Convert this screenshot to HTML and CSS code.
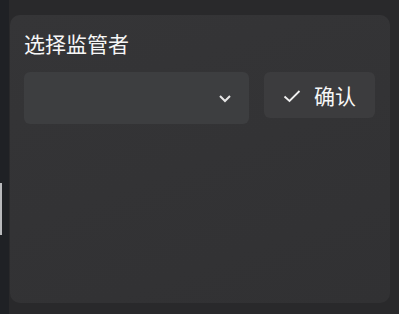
FILE: index.html
```html
<!DOCTYPE html>
<html lang="zh">
<head>
  <meta charset="UTF-8">
  <meta name="viewport" content="width=device-width, initial-scale=1.0">
  <title>选择监管者</title>
  <link rel="stylesheet" href="styles.css">
</head>
<body>

  <div class="side">
    <div class="side-tab"></div>
  </div>

  <div class="main">
    <div class="panel">
      <div class="panel-title">选择监管者</div>
      <div class="panel-row">
        <div class="picker">
          <svg class="chevron" width="14" height="9" viewBox="0 0 14 9">
            <path d="M2 2 L7 7 L12 2" fill="none" stroke="#e6e6e6" stroke-width="2"/>
          </svg>
        </div>
        <button class="confirm">
          <svg class="check" width="18" height="14" viewBox="0 0 18 14">
            <path d="M1.5 7.5 L6.5 12 L16.5 2" fill="none" stroke="#f0f0f0" stroke-width="1.8"/>
          </svg>
          <span>确认</span>
        </button>
      </div>
    </div>
  </div>

</body>
</html>
```

FILE: styles.css
```css
html, body {
  height: 100%;
}
body {
  margin: 0;
  display: flex;
  background: #29292b;
  font-family: "Noto Sans CJK SC", "Noto Sans", sans-serif;
  color: #f7f7f7;
}
.side {
  width: 9px;
  background: #1f2125;
  position: relative;
}
.side-tab {
  position: absolute;
  left: 0;
  top: 183px;
  width: 2px;
  height: 52px;
  background: #b9babd;
}
.main {
  flex: 1;
  padding: 15px 9px 11px 1px;
  display: flex;
}
.panel {
  flex: 1;
  background: linear-gradient(160deg, #353537, #313133);
  border-radius: 10px;
  padding: 13px 15px 0 14px;
}
.panel-title {
  font-size: 21px;
  line-height: 31px;
  height: 31px;
}
.panel-row {
  display: flex;
  align-items: flex-start;
  gap: 15px;
  margin-top: 13px;
}
.picker {
  width: 225px;
  height: 52px;
  background: #3d3e40;
  border-radius: 6px;
  display: flex;
  align-items: center;
  justify-content: flex-end;
  padding-right: 17px;
  box-sizing: border-box;
}
.chevron {
  margin-top: 1px;
}
.confirm {
  flex: 1;
  height: 46px;
  background: #3c3c3e;
  border: none;
  border-radius: 6px;
  color: #f7f7f7;
  font-family: inherit;
  font-size: 21px;
  display: flex;
  align-items: center;
  padding: 0 0 0 19px;
  gap: 13px;
}
.check {
  margin-top: 1px;
}
```
